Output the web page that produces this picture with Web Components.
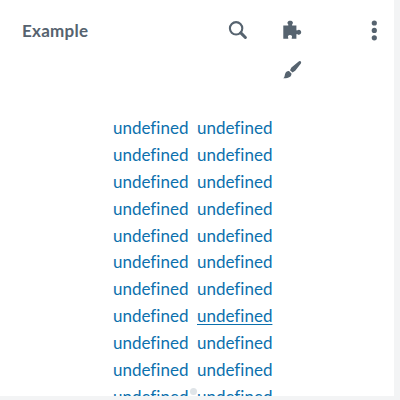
<!DOCTYPE html>
<html lang="en">
<head>
<meta charset="utf-8">
<title>Example</title>
<style>
body {
    margin: 0;
    height: 100vh;
    overflow: hidden;
    background: #f3f4f5;
    font-family: Lato, "Open Sans", sans-serif;
    font-variant-ligatures: none;
}
</style>
</head>
<body>
<example-panel>
    <panel-header slot="header" label="Example"></panel-header>
    <link-grid rows="11" active="15"></link-grid>
</example-panel>

<script>
const ICONS = {
    search: `<circle cx="7.1" cy="7.3" r="6.2" fill="none" stroke="currentColor" stroke-width="2.1"/>
        <path d="M11.8 11.9l4.6 4.6" fill="none" stroke="currentColor" stroke-width="3" stroke-linecap="round"/>`,
    addon: `<path d="M0.3 4.6H4.6C5.4 4.6 5.6 4.1 5.2 3.6C3.6 1.6 4.8 -0.2 7.2 -0.2S10.8 1.6 9.2 3.6C8.8 4.1 9 4.6 9.8 4.6H13.4V8.7C13.4 9.6 13.9 9.7 14.4 9.2C15.9 8 18.2 8.9 18.2 11.2S15.9 14.4 14.4 13.2C13.9 12.7 13.4 12.9 13.4 13.7V17.7H9.3C8.7 17.7 8.5 17.2 8.8 16.7C9.6 15.1 8.6 13.9 7 13.9S4.4 15.1 5.2 16.7C5.5 17.2 5.3 17.7 4.7 17.7H0.3Z" fill="currentColor"/>`,
    brush: `<path d="M17.7 0.4C18.4 1 18.2 2 17.7 2.7L12.2 9.8L9.5 11.6L7 9.2L8.4 6.6L15.4 0.7C16.2 0 17.1 -0.1 17.7 0.4ZM6 10.1L8.5 12.5C8.6 15.8 5.7 17.5 0.2 17.3C1.8 16 1.5 14.8 2 13.2C2.7 11 4.2 9.9 6 10.1Z" fill="currentColor"/>`,
    dots: `<g fill="currentColor"><circle cx="9.3" cy="2" r="2.6"/><circle cx="9.3" cy="9.4" r="2.6"/><circle cx="9.3" cy="16.8" r="2.6"/></g>`
};

class PanelIcon extends HTMLElement {

    constructor() {
        super();
        this.shadow = this.attachShadow({mode: 'open'});
    }

    connectedCallback() {
        this.shadow.innerHTML = `
        <style>
        :host {
            display: block;
            width: 18px;
            height: 18px;
        }
        svg {
            display: block;
            overflow: visible;
        }
        </style>
        <svg width="18" height="18" viewBox="0 0 18 18">${ICONS[this.getAttribute('name')]}</svg>
        `;
    }
}

class PanelHeader extends HTMLElement {

    constructor() {
        super();
        this.shadow = this.attachShadow({mode: 'open'});
    }

    connectedCallback() {
        this.shadow.innerHTML = `
        <style>
        :host {
            display: grid;
            grid-template-columns: 207px 54px 82px 18px;
            grid-template-rows: 40px 18px;
            padding: 21px 0 0 22px;
            color: #56636f;
        }
        .label {
            font-size: 17px;
            font-weight: 700;
            line-height: 20px;
            letter-spacing: 0.25px;
        }
        .brush {
            grid-column: 3;
        }
        </style>
        <span class="label">${this.getAttribute('label')}</span>
        <panel-icon name="search"></panel-icon>
        <panel-icon name="addon"></panel-icon>
        <panel-icon name="dots"></panel-icon>
        <panel-icon class="brush" name="brush"></panel-icon>
        `;
    }
}

class LinkGrid extends HTMLElement {

    constructor() {
        super();
        this.shadow = this.attachShadow({mode: 'open'});
    }

    connectedCallback() {
        this.shadow.innerHTML = `
        <style>
        :host {
            display: grid;
            grid-template-columns: 76px 76px;
            grid-auto-rows: 26.9px;
            column-gap: 8px;
            padding: 35px 0 0 113px;
            color: #0c70ad;
            font-size: 17px;
            line-height: 27px;
        }
        a {
            white-space: nowrap;
        }
        .active {
            text-decoration: underline;
            text-decoration-thickness: 1px;
            text-underline-offset: 2px;
        }
        </style>
        `;
        this.renderLinks();
    }

    renderLinks() {
        let count = this.getAttribute('rows') * 2;
        let active = Number(this.getAttribute('active'));
        for (let i = 0; i < count; i++) {
            let link = document.createElement('a');
            link.textContent = 'undefined';
            if (i === active) {
                link.className = 'active';
            }
            this.shadow.append(link);
        }
    }
}

class ExamplePanel extends HTMLElement {

    constructor() {
        super();
        this.shadow = this.attachShadow({mode: 'open'});
        this.shadow.innerHTML = `
        <style>
        :host {
            display: block;
            position: relative;
            box-sizing: border-box;
            width: 394px;
            height: 396px;
            overflow: hidden;
            background: #fff;
        }
        .handle {
            position: absolute;
            left: 190px;
            top: 388px;
            width: 7px;
            height: 7px;
            border-radius: 50%;
            background: #dfe4e8;
        }
        </style>
        <slot name="header"></slot>
        <slot></slot>
        <div class="handle"></div>
        `;
    }
}

customElements.define('panel-icon', PanelIcon);
customElements.define('panel-header', PanelHeader);
customElements.define('link-grid', LinkGrid);
customElements.define('example-panel', ExamplePanel);
</script>
</body>
</html>
